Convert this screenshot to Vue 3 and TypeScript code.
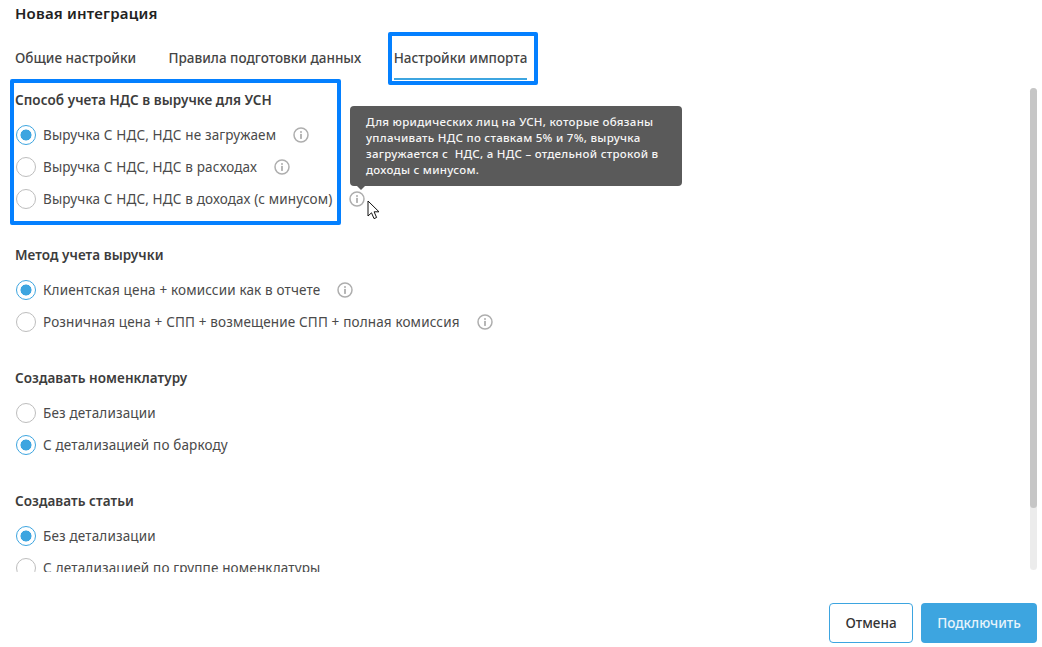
<template>
  <div class="modal">
    <h1 class="title">Новая интеграция</h1>

    <nav class="tabs">
      <button v-for="tab in tabs" :key="tab" class="tab" :class="{ active: tab === activeTab }">{{ tab }}</button>
    </nav>

    <div class="body">
      <div class="scroll">
        <section v-for="group in groups" :key="group.title" class="group">
          <h3>{{ group.title }}</h3>
          <div v-for="opt in group.options" :key="opt.label" class="row">
            <span class="radio" :class="{ checked: opt.checked }"></span>
            <span class="label">{{ opt.label }}</span>
            <svg v-if="opt.info" class="info" viewBox="0 0 16 16" width="16" height="16">
              <circle cx="8" cy="8" r="7" fill="none" stroke="#aeaeae" stroke-width="1.5" />
              <circle cx="8" cy="4.9" r="1" fill="#aeaeae" />
              <rect x="7.1" y="6.9" width="1.8" height="5" fill="#aeaeae" />
            </svg>
          </div>
        </section>
      </div>
      <div class="scrollbar"><div class="thumb"></div></div>
    </div>

    <footer class="footer">
      <button class="btn cancel">Отмена</button>
      <button class="btn primary">Подключить</button>
    </footer>

    <div class="tooltip">
      Для юридических лиц на УСН, которые обязаны уплачивать НДС по ставкам 5% и 7%, выручка загружается с&nbsp; НДС, а НДС – отдельной строкой в доходы с минусом.
    </div>

    <svg class="cursor" viewBox="0 0 14 21" width="14" height="21">
      <path d="M1 1 L1 16 L4.5 12.8 L7 18.6 L9.6 17.5 L7.1 11.8 L12 11.8 Z" fill="#fff" stroke="#111" stroke-width="1" stroke-linejoin="miter" />
    </svg>

    <div class="mark mark-tab"></div>
    <div class="mark mark-group"></div>
  </div>
</template>

<script setup lang="ts">
interface Option {
  label: string
  checked?: boolean
  info?: boolean
}

const tabs = ['Общие настройки', 'Правила подготовки данных', 'Настройки импорта']
const activeTab = 'Настройки импорта'

const groups: { title: string; options: Option[] }[] = [
  {
    title: 'Способ учета НДС в выручке для УСН',
    options: [
      { label: 'Выручка С НДС, НДС не загружаем', checked: true, info: true },
      { label: 'Выручка С НДС, НДС в расходах', info: true },
      { label: 'Выручка С НДС, НДС в доходах (с минусом)', info: true }
    ]
  },
  {
    title: 'Метод учета выручки',
    options: [
      { label: 'Клиентская цена + комиссии как в отчете', checked: true, info: true },
      { label: 'Розничная цена + СПП + возмещение СПП + полная комиссия', info: true }
    ]
  },
  {
    title: 'Создавать номенклатуру',
    options: [
      { label: 'Без детализации' },
      { label: 'С детализацией по баркоду', checked: true }
    ]
  },
  {
    title: 'Создавать статьи',
    options: [
      { label: 'Без детализации', checked: true },
      { label: 'С детализацией по группе номенклатуры' }
    ]
  }
]
</script>

<style>
html, body {
  margin: 0;
  background: #fff;
}
</style>

<style scoped>
.modal {
  position: relative;
  width: 1042px;
  height: 647px;
  overflow: hidden;
  background: #fff;
  font-family: "Noto Sans", "Liberation Sans", sans-serif;
  color: #3c3c3c;
  font-size: 13.5px;
}

.title {
  margin: 0;
  padding: 4px 15px 0;
  height: 33px;
  box-sizing: border-box;
  font-size: 15px;
  line-height: 18px;
  letter-spacing: 0.2px;
  font-weight: 600;
  color: #222;
}

.tabs {
  display: flex;
  gap: 32.5px;
  padding-left: 15px;
  height: 47px;
}

.tab {
  padding: 0;
  height: 47px;
  background: none;
  border: none;
  border-bottom: 2px solid transparent;
  box-sizing: border-box;
  font: inherit;
  font-weight: 500;
  line-height: 50px;
  color: #444;
}

.tab.active {
  border-bottom-color: #3da5e0;
}

.body {
  position: relative;
  height: 484px;
  margin-top: 8px;
}

.scroll {
  height: 484px;
  overflow: hidden;
  padding-left: 15px;
}

.group {
  margin-bottom: 28px;
}

.group h3 {
  margin: 0;
  height: 24px;
  font-size: 13.5px;
  line-height: 24px;
  letter-spacing: 0.06px;
  font-weight: 600;
  color: #3c3c3c;
}

.row {
  display: flex;
  align-items: center;
  height: 32px;
}

.group h3 + .row {
  margin-top: 7px;
}

.radio {
  width: 20px;
  height: 20px;
  box-sizing: border-box;
  border: 1px solid #bdbdbd;
  border-radius: 50%;
  margin-left: 0.5px;
  margin-right: 7.5px;
  flex: none;
}

.radio.checked {
  border: 1.2px solid #3da5e0;
  background: radial-gradient(circle, #3da5e0 0 5.2px, transparent 5.8px);
}

.label {
  white-space: nowrap;
  letter-spacing: 0.15px;
  color: #4a4a4a;
}

.info {
  margin-left: 17px;
  flex: none;
}

.scrollbar {
  position: absolute;
  top: 0;
  left: 1030px;
  width: 7px;
  height: 482px;
  border-radius: 4px;
  background: #ececec;
}

.thumb {
  height: 420px;
  border-radius: 4px;
  background: #c6c6c6;
}

.footer {
  display: flex;
  justify-content: flex-end;
  gap: 8px;
  padding-top: 31px;
  padding-right: 5px;
}

.btn {
  height: 40px;
  border-radius: 4px;
  box-sizing: border-box;
  font: inherit;
  font-weight: 500;
  font-size: 13.5px;
}

.cancel {
  width: 84px;
  background: #fff;
  border: 1px solid #3da5e0;
  color: #333;
}

.primary {
  width: 116px;
  background: #3da5e0;
  border: none;
  color: #e8f4fb;
}

.tooltip {
  position: absolute;
  left: 350px;
  top: 106px;
  width: 332px;
  height: 80px;
  box-sizing: border-box;
  padding: 8px 16px;
  background: #5a5a5a;
  border-radius: 4px;
  color: #f6f6f6;
  font-size: 11.5px;
  line-height: 16px;
  letter-spacing: 0.28px;
  font-weight: 500;
}

.tooltip::after {
  content: "";
  position: absolute;
  left: 7px;
  top: 80px;
  border: 4px solid transparent;
  border-top-color: #5a5a5a;
  border-bottom-width: 0;
}

.cursor {
  position: absolute;
  left: 367px;
  top: 200px;
}

.mark {
  position: absolute;
  box-sizing: border-box;
  border: 4px solid #0480ff;
  border-radius: 2px;
}

.mark-tab {
  left: 388px;
  top: 32px;
  width: 150px;
  height: 53px;
}

.mark-group {
  left: 10px;
  top: 79px;
  width: 331px;
  height: 146px;
}
</style>
